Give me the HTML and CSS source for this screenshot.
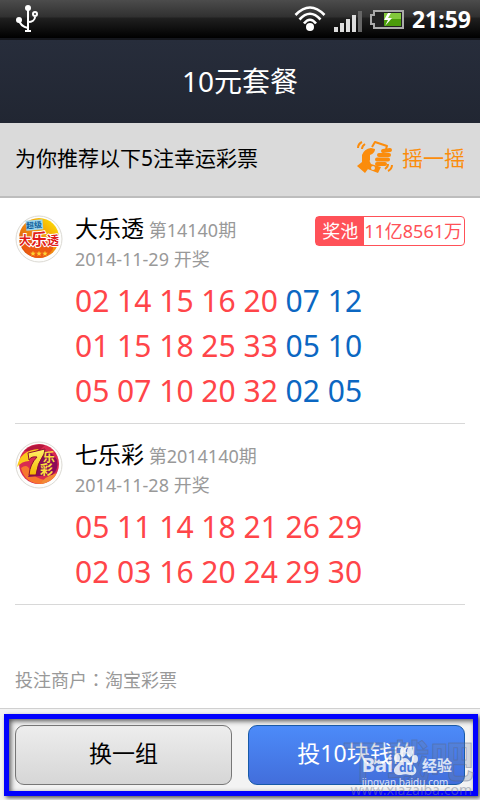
FILE: index.html
```
<!DOCTYPE html>
<html lang="zh-CN">
<head>
  <meta charset="UTF-8">
  <title>10元套餐</title>
  <meta name="viewport" content="width=device-width, initial-scale=1.0">
  <link rel="stylesheet" href="styles.css">
</head>
<body>

  <div class="status-bar">
    <svg class="usb" width="24" height="30" viewBox="0 0 24 30" fill="none" stroke="#fff" stroke-width="2">
      <path d="M12 3v24M3 16c1 5 4 7 9 8M12 18c4 0 7-2 7-5"/>
      <circle cx="12" cy="4" r="3" fill="#fff" stroke="none"/>
      <circle cx="3" cy="16" r="3" fill="#fff" stroke="none"/>
      <circle cx="19" cy="10" r="2"/>
      <path d="M9 27h6"/>
    </svg>
    <div class="status-icons">
      <svg width="32" height="28" viewBox="0 0 32 28" fill="none" stroke="#fff" stroke-width="2.600">
        <path d="M1.500 10Q16-5 30.500 10M5.500 14.500Q16 3 26.500 14.500M10 18.500Q16 11 22 18.500"/>
        <circle cx="16" cy="22" r="4" fill="#fff" stroke="none"/>
      </svg>
      <svg width="28" height="28" viewBox="0 0 28 28">
        <path fill="#ddd" d="M0 22h4v5H0zM6 18h4v9H6zM12 14h4v13h-4zM18 10h4v17h-4z"/>
        <path fill="#666" d="M24 6h4v21h-4z"/>
      </svg>
      <svg width="34" height="28" viewBox="0 0 34 28">
        <path d="M4 6h29v17H4v-4H1v-9h3z" fill="#222" stroke="#aaa" stroke-width="2"/>
        <path d="M14 8h17v13H14z" fill="#4b9c0b"/>
        <path d="M14 8h17v6H14z" fill="#82c83c"/>
        <path d="M18 8l-4 7h4l-3 6 7-8h-4l3-5z" fill="#fff"/>
      </svg>
      <span class="time">21:59</span>
    </div>
  </div>

  <h1 class="header">10元套餐</h1>

  <div class="tip">
    <span>为你推荐以下5注幸运彩票</span>
    <a class="shake" href="#">
      <svg width="36" height="34" viewBox="0 0 36 34">
        <path d="M1 8q0-4 4-6M5 9q0-3 3-5M35 25q0 4-4 6M31 24q0 3-3 5" fill="none" stroke="#fb8c0c" stroke-width="2"/>
        <path d="M5 15q2-6 9-7l4 1q0 4-5 6l0 5-4 7 2 2-3 4-8-7 5-4z" fill="#fb8c0c"/>
        <path d="M15 7l3-5 12 4-1 3" fill="none" stroke="#fb8c0c" stroke-width="2" stroke-linejoin="round"/>
        <path d="M12 20l-4 8 13 5 3-6-10-3z" fill="#fb8c0c"/>
        <circle cx="16" cy="28" r="2" fill="#dadada"/>
        <path d="M26 11l7-1M22 15l10 0M20 19.500l11 0M20 24l8 0" stroke="#fb8c0c" stroke-width="4" stroke-linecap="round"/>
      </svg>
      摇一摇
    </a>
  </div>

  <div class="list">
    <div class="item">
      <svg class="logo" width="48" height="50" viewBox="0 0 48 50">
        <defs>
          <linearGradient id="sun" x1="1" y1="0" x2="0" y2="1">
            <stop offset="0" stop-color="#fff000"/>
            <stop offset=".5" stop-color="#f08a10"/>
            <stop offset="1" stop-color="#d0400c"/>
          </linearGradient>
        </defs>
        <circle cx="24" cy="25" r="23" fill="#fdfdfb" stroke="#dcdad4"/>
        <circle cx="24" cy="24" r="20" fill="url(#sun)"/>
        <path d="M10 27l28-2v10q-6 9-14 9-11 0-17-12z" fill="#ec5a11"/>
        <g transform="rotate(-5 19 12)">
          <rect x="11" y="6" width="17" height="10" fill="#9fd6ee"/>
          <text x="11" y="14" font-size="8" class="blue-name">超级</text>
        </g>
        <text x="4" y="31" font-size="12" class="red-name">大<tspan font-size="16">乐</tspan>透</text>
        <text x="15" y="41" font-size="6" fill="#ffd035">★★★</text>
      </svg>
      <div class="info">
        <div class="title"><span class="name">大乐透</span> <span class="issue">第14140期</span></div>
        <div class="date">2014-11-29 开奖</div>
        <div class="balls">
          <div>02 14 15 16 20 <span class="blue">07 12</span></div>
          <div>01 15 18 25 33 <span class="blue">05 10</span></div>
          <div>05 07 10 20 32 <span class="blue">02 05</span></div>
        </div>
      </div>
      <div class="pool"><span class="pool-label">奖池</span><span class="pool-money">11亿8561万</span></div>
    </div>

    <div class="item">
      <svg class="logo" width="48" height="50" viewBox="0 0 48 50">
        <defs>
          <linearGradient id="gold" x1="0" y1="0" x2="0" y2="1">
            <stop offset="0" stop-color="#fff36a"/>
            <stop offset="1" stop-color="#f5b800"/>
          </linearGradient>
        </defs>
        <circle cx="24" cy="25" r="23" fill="#fdfdfb" stroke="#dcdad4"/>
        <circle cx="24" cy="24" r="20" fill="#d92a50"/>
        <path d="M9 11Q18 3 30 5l-6 6q-10 0-15 0z" fill="#b5173d"/>
        <path d="M2 27Q5 10 24 9q-8 5-10 12-7 0-12 6z" fill="#fbc91b"/>
        <path d="M6 28q6-5 9 2 4 8 15 10l-3 4Q10 44 6 28z" fill="#f7772d"/>
        <path d="M26 44q2-7 16-11-4 9-16 11z" fill="#f28a35"/>
        <path d="M24 11q12-2 18 9 2 10-5 15L13 37z" fill="#8c0d58"/>
        <path d="M13 13l17-4-1 5q-7 10-8 21h-7q1-11 8-18-6-1-8 3z" fill="url(#gold)" stroke="#8c1030"/>
        <text x="28" y="22" font-size="12" class="gold-name">乐</text>
        <text x="25" y="34" font-size="13" class="gold-name">彩</text>
      </svg>
      <div class="info">
        <div class="title"><span class="name">七乐彩</span> <span class="issue">第2014140期</span></div>
        <div class="date">2014-11-28 开奖</div>
        <div class="balls">
          <div>05 11 14 18 21 26 29</div>
          <div>02 03 16 20 24 29 30</div>
        </div>
      </div>
    </div>
  </div>

  <div class="merchant">投注商户<span class="colon" lang="zh-TW">：</span>淘宝彩票</div>

  <div class="footer">
    <button class="btn">换一组</button>
    <button class="btn btn-blue">投10块钱的</button>
    <div class="mark"></div>
    <div class="site-back">下载吧</div>
    <div class="site-url">www.xiazaiba.com</div>
    <div class="baidu">
      <div class="baidu-name">
        <span>Bai</span>
        <svg width="25" height="30" viewBox="0 0 25 30" fill="#fff">
          <ellipse cx="4" cy="12" rx="3" ry="4"/>
          <ellipse cx="10" cy="6" rx="3" ry="5"/>
          <ellipse cx="17" cy="6" rx="3" ry="5"/>
          <ellipse cx="22" cy="13" rx="3" ry="4"/>
          <path d="M12 12c4 0 5 5 9 8 5 5 1 10-4 9-4-1-6-1-9 0-7 1-9-5-5-9 4-3 5-8 9-8z"/>
          <text x="6" y="26" font-size="12" class="du">du</text>
        </svg>
        <span class="jingyan">经验</span>
      </div>
      <div class="baidu-url">jingyan.baidu.com</div>
    </div>
  </div>

</body>
</html>
```
FILE: styles.css
```
* {
  box-sizing: border-box;
}

body {
  font-family: "Noto Sans", "Noto Sans CJK SC", sans-serif;
  background: #fff;
  margin: 0;
  min-height: 100vh;
  display: flex;
  flex-direction: column;
}

svg {
  display: block;
  flex: none;
}

.status-bar {
  display: flex;
  justify-content: space-between;
  align-items: center;
  height: 40px;
  padding: 0 9px 2px 16px;
  background: linear-gradient(#4c4c4c, #303030 17px, #202020 18px, #000 38px, #14161c 38px);
}

.status-icons {
  display: flex;
  align-items: center;
  gap: 8px;
}

.time {
  color: #fff;
  font-size: 23px;
  font-weight: bold;
  line-height: 38px;
}

.header {
  margin: 0;
  background: linear-gradient(#272d3b, #212632);
  color: #fff;
  text-align: center;
  font-size: 28px;
  font-weight: normal;
  line-height: 83px;
}

.tip {
  display: flex;
  justify-content: space-between;
  align-items: center;
  height: 75px;
  padding: 0 15px 6px;
  background: #dadada;
  border-bottom: 2px solid #bdbdbd;
  font-size: 21px;
}

.shake {
  display: flex;
  align-items: center;
  gap: 9px;
  color: #fb8c0c;
  text-decoration: none;
}

.list {
  padding: 0 15px;
}

.item {
  display: flex;
  align-items: flex-start;
  padding: 16px 0 10px;
  border-bottom: 1px solid #d8d8d8;
}

.logo {
  margin-right: 12px;
}

.info {
  flex: 1;
  min-width: 0;
}

.title {
  height: 30px;
  line-height: 28px;
  font-size: 18px;
  white-space: nowrap;
}

.name {
  font-size: 23px;
  color: #000;
}

.issue {
  color: #999;
}

.date {
  font-size: 18px;
  line-height: 30px;
  color: #999;
}

.balls {
  margin-top: 4px;
  font-size: 30px;
  line-height: 45px;
  color: #ff4549;
  white-space: nowrap;
}

.blue {
  color: #0b67c2;
}

.pool {
  display: flex;
  flex: none;
  margin-top: 2px;
  border: 1px solid #ff5158;
  border-radius: 4px;
  font-size: 18px;
  line-height: 28px;
  color: #ff5158;
  white-space: nowrap;
}

.pool-label {
  padding: 0 6px;
  background: #ff5158;
  color: #fff;
}

.pool-money {
  padding-right: 2px;
}

.blue-name {
  fill: #0d5f9c;
  font-weight: bold;
}

.red-name {
  fill: #e01b1b;
  stroke: #fff;
  stroke-width: 2px;
  paint-order: stroke;
  font-weight: bold;
}

.gold-name {
  fill: #fde03c;
  font-weight: bold;
}

.merchant {
  margin-top: auto;
  padding: 0 15px 12px;
  font-size: 18px;
  line-height: 32px;
  color: #999;
}

.colon {
  font-family: "Noto Sans CJK TC", sans-serif;
}

.footer {
  position: relative;
  display: flex;
  gap: 16px;
  padding: 16px 15px 15px;
  border-top: 1px solid #d0d0d0;
  background: #f3f3f3;
}

.btn {
  flex: 1;
  height: 60px;
  padding: 0 0 6px;
  border: 1px solid #777;
  border-radius: 9px;
  background: linear-gradient(#ededed, #d6d6d6);
  color: #000;
  font-family: inherit;
  font-size: 23px;
}

.btn-blue {
  border-color: #185aa8;
  background: linear-gradient(#4c8bf9, #426edb);
  color: #fff;
}

/* highlight frame round the two buttons */
.mark {
  position: absolute;
  top: 5px;
  right: 2px;
  bottom: 4px;
  left: 4px;
  border: 5px solid #0000fe;
  box-shadow: 2px 2px 4px #555, inset 2px 2px 5px #555;
  pointer-events: none;
}

/* watermarks */
.site-back,
.site-url,
.baidu {
  position: absolute;
  pointer-events: none;
  white-space: nowrap;
}

.site-back {
  right: 6px;
  bottom: 12px;
  font-size: 44px;
  font-weight: bold;
  line-height: 54px;
  color: rgba(110, 125, 155, 0.25);
  -webkit-text-stroke: 1px rgba(90, 100, 125, 0.4);
}

.site-url {
  right: 8px;
  bottom: 2px;
  font-size: 14px;
  line-height: 16px;
  color: rgba(120, 130, 150, 0.5);
}

.baidu {
  right: 28px;
  bottom: 12px;
  color: #fff;
  opacity: 0.8;
}

.baidu-name {
  display: flex;
  align-items: flex-end;
  font-size: 20px;
  font-weight: bold;
  line-height: 22px;
}

.jingyan {
  margin-left: 4px;
  font-size: 15px;
}

.du {
  fill: #4777e0;
}

.baidu-url {
  font-size: 10px;
  line-height: 12px;
}
```
